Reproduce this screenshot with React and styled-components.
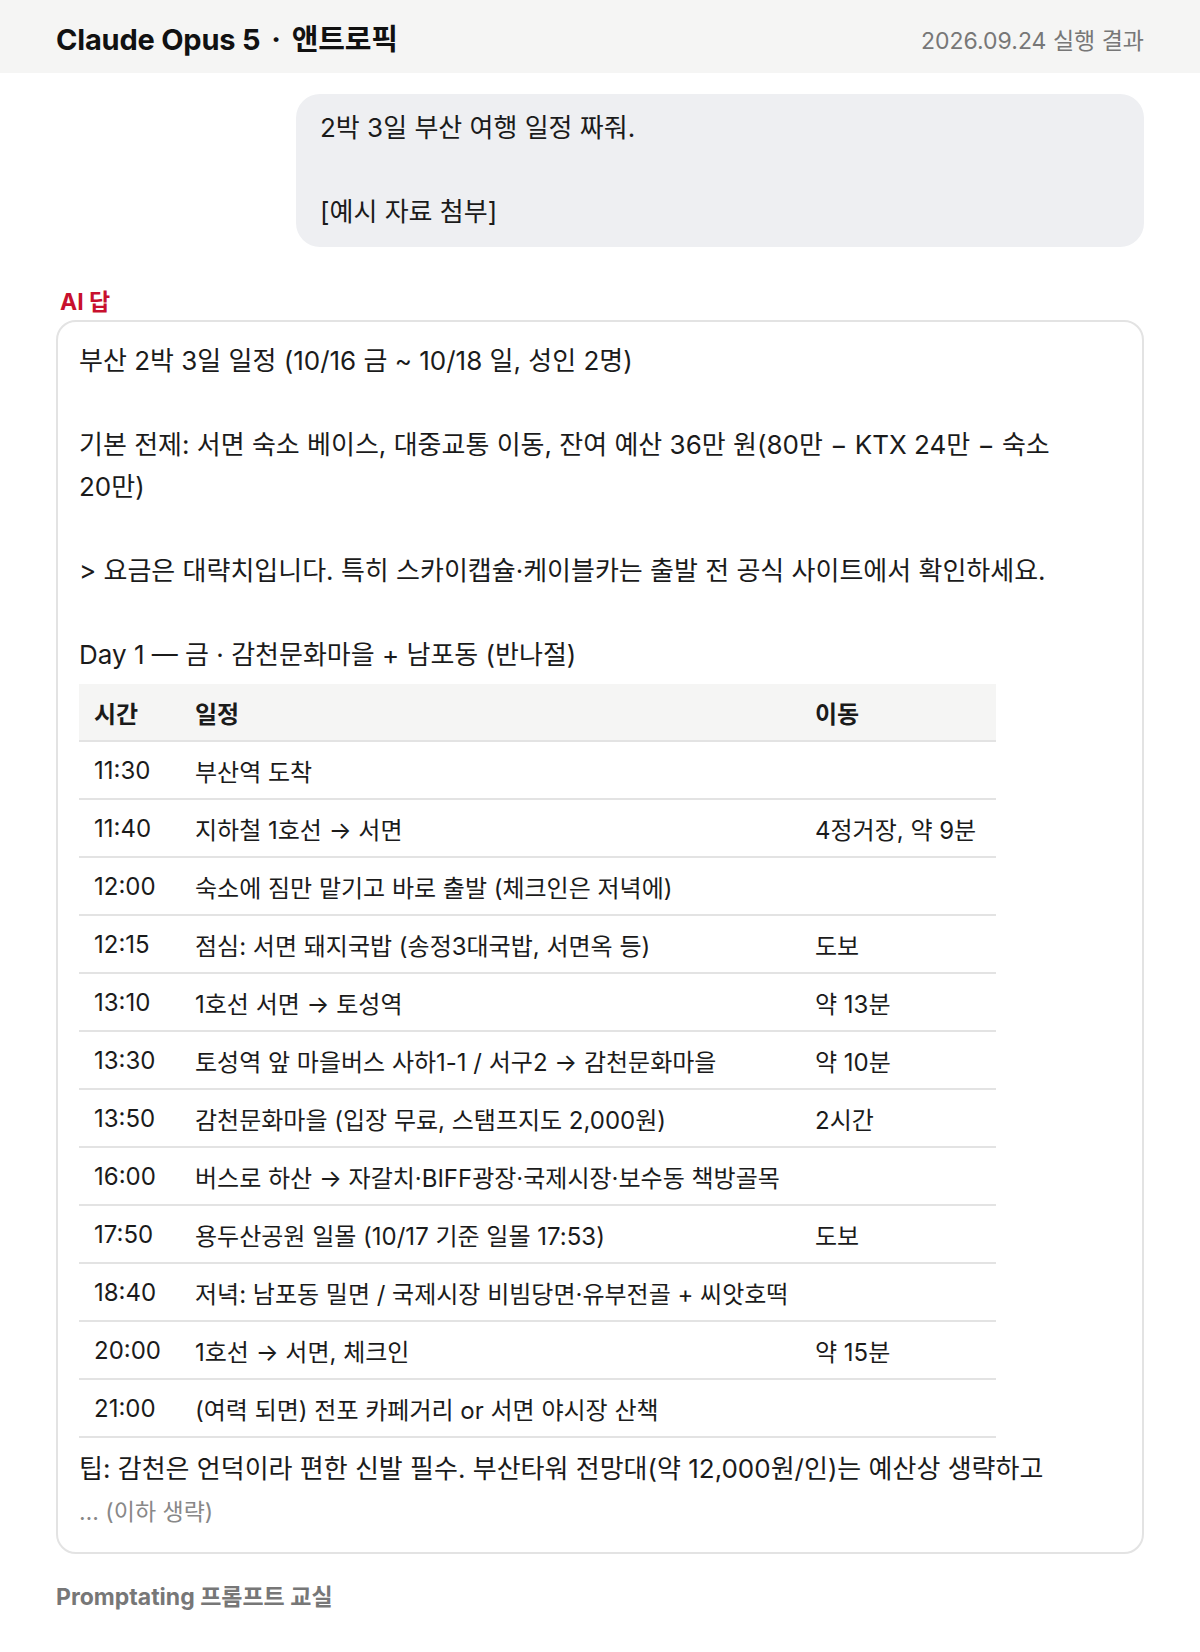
import React from 'react';
import styled, { createGlobalStyle } from 'styled-components';

const GlobalStyle = createGlobalStyle`
  body {
    margin: 0;
    background: #fff;
    font-family: "Inter", "Noto Sans CJK KR", sans-serif;
    color: #1b1b1b;
    word-break: keep-all;
  }
`;

const Header = styled.header`
  height: 73px;
  background: #f5f5f4;
  display: flex;
  align-items: center;
  justify-content: space-between;
  padding: 0 56px;
`;

const Title = styled.h1`
  margin: 0;
  font-size: 29px;
  font-weight: 700;
  color: #111;
  letter-spacing: -0.2px;
`;

const Dot = styled.span`
  margin: 0 11px;
`;

const RunDate = styled.span`
  font-size: 23px;
  color: #777;
  margin-top: 4px;
`;

const Main = styled.main`
  padding: 21px 56px 40px;
  display: flex;
  flex-direction: column;
`;

const Bubble = styled.div`
  align-self: flex-end;
  width: 848px;
  box-sizing: border-box;
  background: #eeeff2;
  border-radius: 24px;
  padding: 13px 24px 14px;
  font-size: 26px;
  line-height: 42px;
  white-space: pre-wrap;
`;

const Label = styled.div`
  margin: 42px 0 0 4px;
  font-size: 23px;
  line-height: 26px;
  font-weight: 700;
  color: #c8102e;
`;

const Card = styled.section`
  margin-top: 5px;
  border: 2px solid #e3e3e3;
  border-radius: 20px;
  padding: 18px 22px 22px 21px;
`;

const Para = styled.p`
  margin: 0 0 ${p => (p.$gap ? '42px' : '0')};
  font-size: 26px;
  line-height: 42px;
`;

const Tip = styled(Para)`
  margin-top: 10px;
`;

const Table = styled.table`
  width: 917px;
  margin-top: 8px;
  border-collapse: collapse;
  table-layout: fixed;
  font-size: 24px;
`;

const Th = styled.th`
  height: 56px;
  background: #f5f5f4;
  text-align: left;
  font-weight: 700;
  padding: 0 15px;
  width: ${p => p.$w || 'auto'};
  border-bottom: 2px solid #e3e3e3;
`;

const Td = styled.td`
  height: 56px;
  padding: 0 15px;
  white-space: nowrap;
  border-bottom: 2px solid #e3e3e3;
`;

const More = styled.div`
  margin-top: 4px;
  font-size: 23px;
  line-height: 36px;
  color: #888;
`;

const Footer = styled.footer`
  margin-top: 24px;
  font-size: 23px;
  font-weight: 700;
  color: #777;
`;

const rows = [
  ['11:30', '부산역 도착', ''],
  ['11:40', '지하철 1호선 → 서면', '4정거장, 약 9분'],
  ['12:00', '숙소에 짐만 맡기고 바로 출발 (체크인은 저녁에)', ''],
  ['12:15', '점심: 서면 돼지국밥 (송정3대국밥, 서면옥 등)', '도보'],
  ['13:10', '1호선 서면 → 토성역', '약 13분'],
  ['13:30', '토성역 앞 마을버스 사하1-1 / 서구2 → 감천문화마을', '약 10분'],
  ['13:50', '감천문화마을 (입장 무료, 스탬프지도 2,000원)', '2시간'],
  ['16:00', '버스로 하산 → 자갈치·BIFF광장·국제시장·보수동 책방골목', ''],
  ['17:50', '용두산공원 일몰 (10/17 기준 일몰 17:53)', '도보'],
  ['18:40', '저녁: 남포동 밀면 / 국제시장 비빔당면·유부전골 + 씨앗호떡', ''],
  ['20:00', '1호선 → 서면, 체크인', '약 15분'],
  ['21:00', '(여력 되면) 전포 카페거리 or 서면 야시장 산책', ''],
];

export default function App() {
  return (
    <>
      <GlobalStyle />
      <Header>
        <Title>Claude Opus 5<Dot>·</Dot>앤트로픽</Title>
        <RunDate>2026.09.24 실행 결과</RunDate>
      </Header>
      <Main>
        <Bubble>{'2박 3일 부산 여행 일정 짜줘.\n\n[예시 자료 첨부]'}</Bubble>
        <Label>AI 답</Label>
        <Card>
          <Para $gap>부산 2박 3일 일정 (10/16 금 ~ 10/18 일, 성인 2명)</Para>
          <Para $gap>기본 전제: 서면 숙소 베이스, 대중교통 이동, 잔여 예산 36만 원(80만 − KTX 24만 − 숙소 20만)</Para>
          <Para $gap>&gt; 요금은 대략치입니다. 특히 스카이캡슐·케이블카는 출발 전 공식 사이트에서 확인하세요.</Para>
          <Para>Day 1 — 금 · 감천문화마을 + 남포동 (반나절)</Para>
          <Table>
            <thead>
              <tr>
                <Th $w="71px">시간</Th>
                <Th $w="590px">일정</Th>
                <Th>이동</Th>
              </tr>
            </thead>
            <tbody>
              {rows.map(([t, plan, move]) => (
                <tr key={t}>
                  <Td>{t}</Td>
                  <Td>{plan}</Td>
                  <Td>{move}</Td>
                </tr>
              ))}
            </tbody>
          </Table>
          <Tip>팁: 감천은 언덕이라 편한 신발 필수. 부산타워 전망대(약 12,000원/인)는 예산상 생략하고</Tip>
          <More>… (이하 생략)</More>
        </Card>
        <Footer>Promptating 프롬프트 교실</Footer>
      </Main>
    </>
  );
}
